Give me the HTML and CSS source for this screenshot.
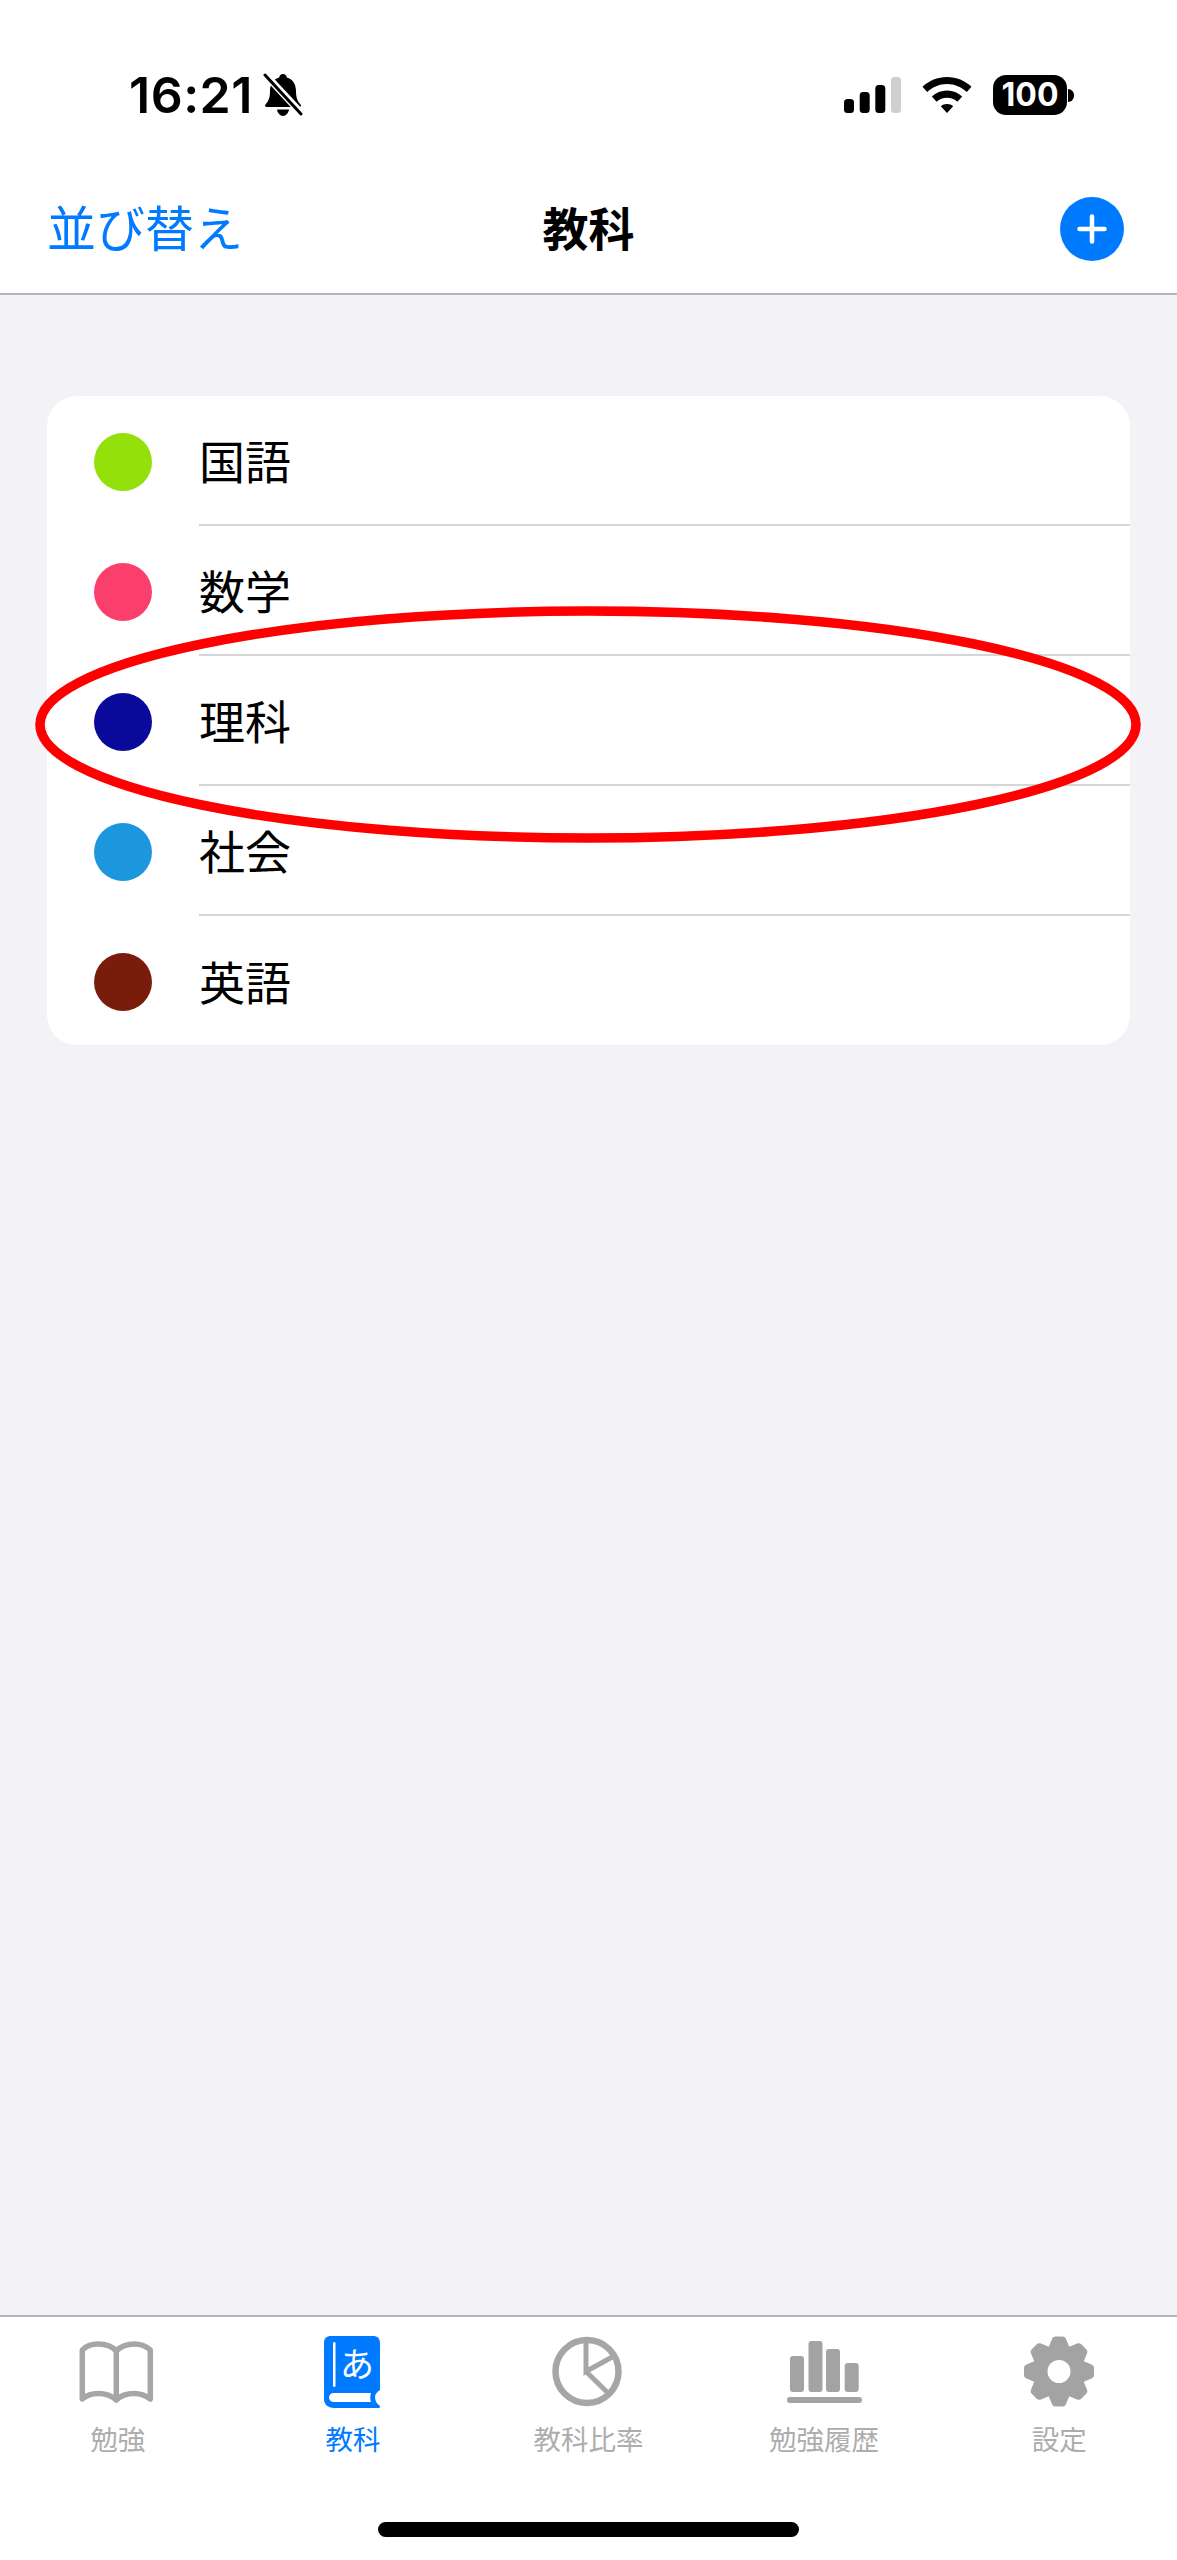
FILE: index.html
```html
<!DOCTYPE html>
<html lang="ja">
<head>
  <meta charset="UTF-8" />
  <meta name="viewport" content="width=device-width, initial-scale=1.0" />
  <title>教科</title>
  <link rel="stylesheet" href="styles.css">
</head>
<body>

  <div class="phone">
    <header class="status-bar">
      <div class="status-left">
        <span class="clock">16:21</span>
        <svg class="bell" viewBox="0 0 40 44">
          <path d="M20 1c2.200 0 3.500 1.500 3.800 3.500C29.500 6 33 11 33 18c0 7 1.500 10 4.500 13.500 1 1.300.5 2.500-1.500 2.500H4c-2 0-2.500-1.200-1.500-2.500C5.500 28 7 25 7 18c0-7 3.500-12 9.200-13.500C16.500 2.500 17.800 1 20 1z" fill="#000"/>
          <path d="M14 36.500h12c-.5 3.500-3 6.500-6 6.500s-5.500-3-6-6.500z" fill="#000"/>
          <path d="M0 -1l40 43" stroke="#fff" stroke-width="7"/>
          <path d="M2 2l36 39" stroke="#000" stroke-width="3" stroke-linecap="round"/>
        </svg>
      </div>
      <div class="status-right">
        <svg class="signal" viewBox="0 0 57 36">
          <rect x="0" y="22" width="10" height="14" rx="3.500" fill="#000"/>
          <rect x="15.700" y="15" width="10" height="21" rx="3.500" fill="#000"/>
          <rect x="31.300" y="8" width="10" height="28" rx="3.500" fill="#000"/>
          <rect x="47" y="0" width="10" height="36" rx="3.500" fill="#cfcfcf"/>
        </svg>
        <svg class="wifi" viewBox="0 0 50 36">
          <path d="M25 0c9.500 0 18 3.700 24.500 9.700l-4.700 5.300C39.500 10 32.500 7 25 7S10.500 10 5.200 15L.5 9.700C7 3.700 15.500 0 25 0z" fill="#000"/>
          <path d="M25 13.500c5.800 0 11 2.200 15.200 6l-4.800 5.300C32.600 22.300 29 20.800 25 20.800s-7.600 1.500-10.400 4L9.800 19.500c4.200-3.800 9.400-6 15.200-6z" fill="#000"/>
          <path d="M25 27c2.500 0 4.600.8 6.200 2.200L25 36l-6.200-6.800C20.400 27.800 22.500 27 25 27z" fill="#000"/>
        </svg>
        <div class="battery">
          <span class="battery-body">100</span>
          <span class="battery-cap"></span>
        </div>
      </div>
    </header>

    <nav class="nav-bar">
      <span class="nav-link">並び替え</span>
      <h1 class="nav-title">教科</h1>
      <span class="add-btn">
        <svg viewBox="0 0 64 64">
          <path d="M32 19.500v25M19.500 32h25" stroke="#fff" stroke-width="4.500" stroke-linecap="round"/>
        </svg>
      </span>
    </nav>

    <main class="content">
      <ul class="subject-list">
        <li class="subject-row">
          <span class="dot dot-kokugo"></span>
          <span class="subject-name">国語</span>
        </li>
        <li class="subject-row">
          <span class="dot dot-sugaku"></span>
          <span class="subject-name">数学</span>
        </li>
        <li class="subject-row">
          <span class="dot dot-rika"></span>
          <span class="subject-name">理科</span>
        </li>
        <li class="subject-row">
          <span class="dot dot-shakai"></span>
          <span class="subject-name">社会</span>
        </li>
        <li class="subject-row">
          <span class="dot dot-eigo"></span>
          <span class="subject-name">英語</span>
        </li>
      </ul>
    </main>

    <footer class="tab-bar">
      <div class="tabs">
        <div class="tab">
          <svg class="tab-icon" viewBox="0 0 80 76">
            <path d="M38.300 17C34 12 27 10 20 10 13 10 8 12 4.300 16V65C9 61 14 59.500 20 59.500 27 59.500 33 61 38.300 66 43 61 50 59.500 56.500 59.500 62 59.500 67 61 72.300 65V16C68 12 63 10 56.500 10 50 10 43 12 38.300 17ZM38.300 17V66" fill="none" stroke="#a6a6a6" stroke-width="5.500" stroke-linejoin="round" stroke-linecap="round"/>
          </svg>
          <span class="tab-label">勉強</span>
        </div>
        <div class="tab tab-active">
          <svg class="tab-icon" viewBox="0 0 80 76">
            <path d="M18 2H60C64.500 2 67 4.500 67 9V56C64 58 62 60 62 63 62 67 64 70 67 72 67.500 73.500 66.500 74 65 74H21C15 74 11 70.500 11 65V9C11 4.500 13.500 2 18 2Z" fill="#007aff"/>
            <rect x="20" y="8" width="2.500" height="45" rx="1.250" fill="#fff"/>
            <path d="M21 59H58C57 62 57 65 58 68H21C18 68 16 66 16 63.500 16 61 18 59 21 59Z" fill="#fff"/>
            <text class="book-kana" x="44" y="43" text-anchor="middle">あ</text>
          </svg>
          <span class="tab-label">教科</span>
        </div>
        <div class="tab">
          <svg class="tab-icon" viewBox="0 0 80 76">
            <circle cx="39" cy="37.500" r="31.500" fill="none" stroke="#a6a6a6" stroke-width="6.500"/>
            <path d="M38 6V37.500L66 22M38 37.500L62 61" fill="none" stroke="#a6a6a6" stroke-width="5"/>
          </svg>
          <span class="tab-label">教科比率</span>
        </div>
        <div class="tab">
          <svg class="tab-icon" viewBox="0 0 80 76">
            <rect x="6" y="22" width="14" height="36" rx="3" fill="#a3a3a3"/>
            <rect x="24.500" y="7" width="14" height="51" rx="3" fill="#a3a3a3"/>
            <rect x="42" y="15" width="14" height="43" rx="3" fill="#a3a3a3"/>
            <rect x="60.700" y="29" width="14" height="29" rx="3" fill="#a3a3a3"/>
            <rect x="3" y="63" width="75" height="6" rx="3" fill="#a3a3a3"/>
          </svg>
          <span class="tab-label">勉強履歴</span>
        </div>
        <div class="tab">
          <svg class="tab-icon" viewBox="0 0 80 76">
            <defs>
              <path id="gear-tooth" d="M-11 -23L-7 -32.500C-6.300 -34.300-5 -35-3.500 -35H3.500C5 -35 6.300 -34.300 7 -32.500L11 -23Z"/>
            </defs>
            <g fill="#a3a3a3" transform="translate(40 37.500)">
              <circle r="26"/>
              <use href="#gear-tooth"/>
              <use href="#gear-tooth" transform="rotate(45)"/>
              <use href="#gear-tooth" transform="rotate(90)"/>
              <use href="#gear-tooth" transform="rotate(135)"/>
              <use href="#gear-tooth" transform="rotate(180)"/>
              <use href="#gear-tooth" transform="rotate(225)"/>
              <use href="#gear-tooth" transform="rotate(270)"/>
              <use href="#gear-tooth" transform="rotate(315)"/>
              <circle r="11.500" fill="#fff"/>
            </g>
          </svg>
          <span class="tab-label">設定</span>
        </div>
      </div>
      <div class="home-indicator"></div>
    </footer>

    <svg class="circle-mark" viewBox="0 0 1177 2560">
      <ellipse cx="588" cy="724.500" rx="548" ry="113.500" fill="none" stroke="#ff0000" stroke-width="9.500"/>
    </svg>
  </div>

</body>
</html>
```

FILE: styles.css
```css
*, *::before, *::after {
  box-sizing: border-box;
}

body {
  margin: 0;
  background: #f2f2f7;
  color: #000;
  font-family: "Noto Sans CJK JP", "Noto Sans", sans-serif;
}

.phone {
  position: relative;
  width: 1177px;
  height: 2560px;
  display: flex;
  flex-direction: column;
  overflow: hidden;
}

/* status bar */
.status-bar {
  height: 160px;
  background: #fff;
  display: flex;
  justify-content: space-between;
  align-items: flex-start;
  padding: 70px 103px 0 129px;
}

.status-left {
  display: flex;
  align-items: center;
  gap: 10px;
}

.clock {
  font-family: Inter, sans-serif;
  font-size: 50px;
  font-weight: 600;
  line-height: 50px;
  letter-spacing: 0.5px;
}

.bell {
  width: 40px;
  height: 44px;
}

.status-right {
  display: flex;
  align-items: center;
  gap: 21px;
  padding-top: 5px;
}

.signal {
  width: 57px;
  height: 36px;
}

.wifi {
  width: 50px;
  height: 36px;
}

.battery {
  display: flex;
  align-items: center;
  gap: 1px;
}

.battery-body {
  width: 74px;
  height: 40px;
  border-radius: 13px;
  background: #000;
  color: #fff;
  font-family: Inter, sans-serif;
  font-size: 32px;
  font-weight: 700;
  line-height: 40px;
  text-align: center;
}

.battery-cap {
  width: 6px;
  height: 13px;
  background: #000;
  border-radius: 0 6px 6px 0;
}

/* nav bar */
.nav-bar {
  position: relative;
  height: 135px;
  background: #fff;
  border-bottom: 2px solid #b4b4b8;
  display: flex;
  justify-content: space-between;
  align-items: center;
  padding: 5px 53px 0 47px;
}

.nav-link {
  font-size: 49px;
  line-height: 64px;
  padding-bottom: 6px;
  color: #007aff;
}

.nav-title {
  position: absolute;
  left: 0;
  right: 0;
  margin: 0;
  padding-bottom: 6px;
  font-size: 46px;
  font-weight: 700;
  line-height: 64px;
  text-align: center;
}

.add-btn {
  width: 64px;
  height: 64px;
  border-radius: 50%;
  background: #007aff;
  display: block;
}

.add-btn svg {
  display: block;
  width: 64px;
  height: 64px;
}

/* list */
.content {
  flex: 1;
  padding: 101px 47px 0;
}

.subject-list {
  list-style: none;
  margin: 0;
  padding: 0 0 0 47px;
  background: #fff;
  border-radius: 30px;
}

.subject-row {
  height: 130px;
  display: flex;
  align-items: center;
  gap: 47px;
}

.subject-row:last-child {
  height: 129px;
}

.dot {
  width: 58px;
  height: 58px;
  margin-top: 2px;
  border-radius: 50%;
  flex: none;
}

.dot-kokugo { background: #93e00b; }
.dot-sugaku { background: #fb3f6c; }
.dot-rika { background: #0a0a9a; }
.dot-shakai { background: #1c97dd; }
.dot-eigo { background: #7a1c0c; }

.subject-name {
  flex: 1;
  align-self: stretch;
  display: flex;
  align-items: center;
  padding-bottom: 2px;
  font-size: 46px;
  border-bottom: 2px solid #d6d6d8;
}

.subject-row:last-child .subject-name {
  border-bottom: 0;
}

/* tab bar */
.tab-bar {
  height: 245px;
  background: #fff;
  border-top: 2px solid #b4b4b8;
  display: flex;
  flex-direction: column;
}

.tabs {
  display: grid;
  grid-template-columns: repeat(5, 1fr);
  padding-top: 17px;
}

.tab {
  display: flex;
  flex-direction: column;
  align-items: center;
  color: #adadad;
}

.tab-active {
  color: #007aff;
}

.tab-icon {
  display: block;
  width: 80px;
  height: 76px;
}

.tab-label {
  margin-top: 10px;
  font-size: 27.5px;
  line-height: 36px;
}

.book-kana {
  font-family: "Noto Sans CJK JP", sans-serif;
  font-size: 34px;
  fill: #fff;
}

.home-indicator {
  width: 421px;
  height: 15px;
  border-radius: 8px;
  background: #000;
  margin: 66px auto 0;
}

/* hand-drawn red circle over the list */
.circle-mark {
  position: absolute;
  top: 0;
  left: 0;
  width: 1177px;
  height: 2560px;
  pointer-events: none;
}
```
